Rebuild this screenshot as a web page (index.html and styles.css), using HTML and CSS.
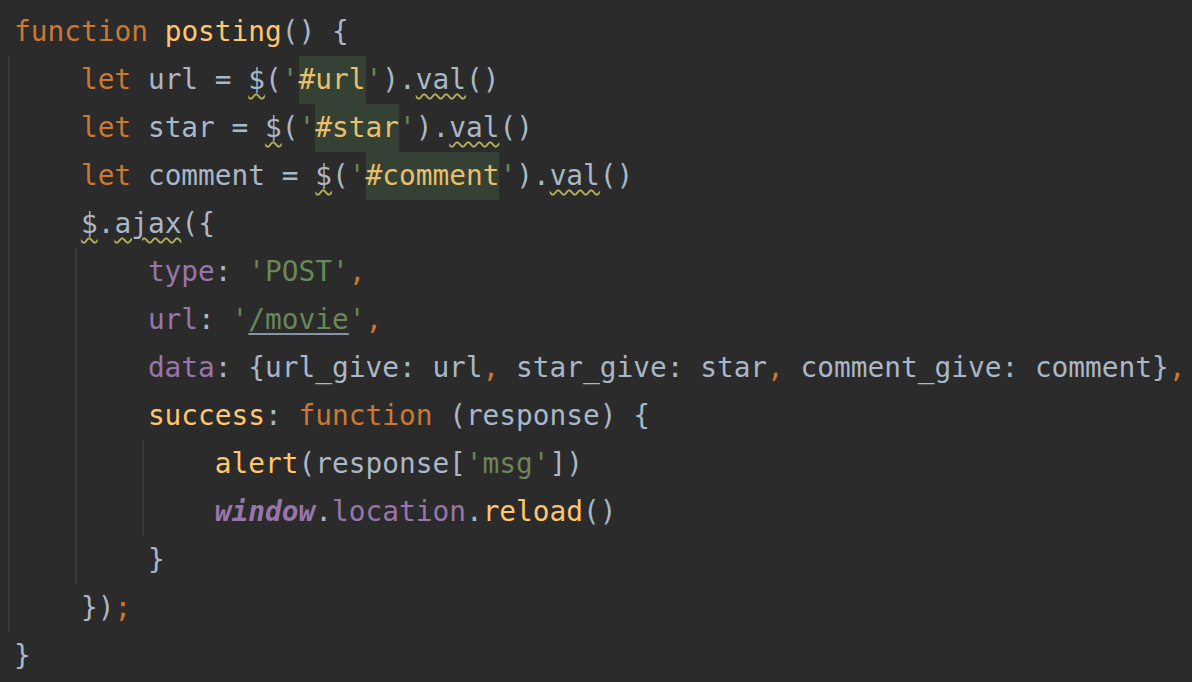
FILE: index.html
```html
<!DOCTYPE html>
<html>
<head>
<meta charset="utf-8">
<link rel="stylesheet" href="styles.css">
</head>
<body>
<div class="editor">
  <div class="ln"><span class="kw">function</span> <span class="fn">posting</span>() {</div>
  <div class="block">
    <div class="ln"><span class="kw">let</span> url = <span class="warn">$</span>(<span class="str">'</span><span class="hl"><span class="hs">#url</span></span><span class="str">'</span>).<span class="warn">val</span>()</div>
    <div class="ln"><span class="kw">let</span> star = <span class="warn">$</span>(<span class="str">'</span><span class="hl"><span class="hs">#star</span></span><span class="str">'</span>).<span class="warn">val</span>()</div>
    <div class="ln"><span class="kw">let</span> comment = <span class="warn">$</span>(<span class="str">'</span><span class="hl"><span class="hs">#comment</span></span><span class="str">'</span>).<span class="warn">val</span>()</div>
    <div class="ln"><span class="warn">$</span>.<span class="warn">ajax</span>({</div>
    <div class="block">
      <div class="ln"><span class="prop">type</span>: <span class="str">'POST'</span><span class="kw">,</span></div>
      <div class="ln"><span class="prop">url</span>: <span class="str">'<span class="link">/movie</span>'</span><span class="kw">,</span></div>
      <div class="ln"><span class="prop">data</span>: {url_give: url<span class="kw">,</span> star_give: star<span class="kw">,</span> comment_give: comment}<span class="kw">,</span></div>
      <div class="ln"><span class="fn">success</span>: <span class="kw">function</span> (response) {</div>
      <div class="block">
        <div class="ln"><span class="fn">alert</span>(response[<span class="str">'msg'</span>])</div>
        <div class="ln"><span class="glob">window</span><span>.</span><span class="prop">location</span>.<span class="fn">reload</span>()</div>
      </div>
      <div class="ln">}</div>
    </div>
    <div class="ln">})<span class="kw">;</span></div>
  </div>
  <div class="ln">}</div>
</div>
</body>
</html>
```

FILE: styles.css
```css
html, body {
  margin: 0;
  padding: 0;
  background: #2b2b2b;
  width: 1192px;
  height: 682px;
  overflow: hidden;
}

.editor {
  padding: 8px 0 0 14px;
  font-family: "DejaVu Sans Mono", "Liberation Mono", monospace;
  font-size: 27.8px;
  color: #a9b7c6;
}

.ln {
  height: 48px;
  line-height: 48px;
  white-space: pre;
}

.block {
  margin-left: -6px;
  border-left: 2px solid #393939;
  padding-left: calc(4ch + 4px);
}

.kw { color: #cc7832; }
.fn { color: #ffc66d; }
.str { color: #6a8759; }
.prop { color: #9876aa; }
.glob { color: #9876aa; font-style: italic; font-weight: bold; }

.hl {
  display: inline-block;
  height: 48px;
  line-height: 48px;
  background: #344134;
  vertical-align: baseline;
}
.hs { color: #e8bf6a; }

.warn {
  text-decoration: underline wavy #b0b05a;
  text-decoration-thickness: 1.5px;
  text-underline-offset: 4px;
}

.link {
  text-decoration: underline solid #8592a8;
  text-decoration-thickness: 2px;
  text-underline-offset: 4px;
}
```
